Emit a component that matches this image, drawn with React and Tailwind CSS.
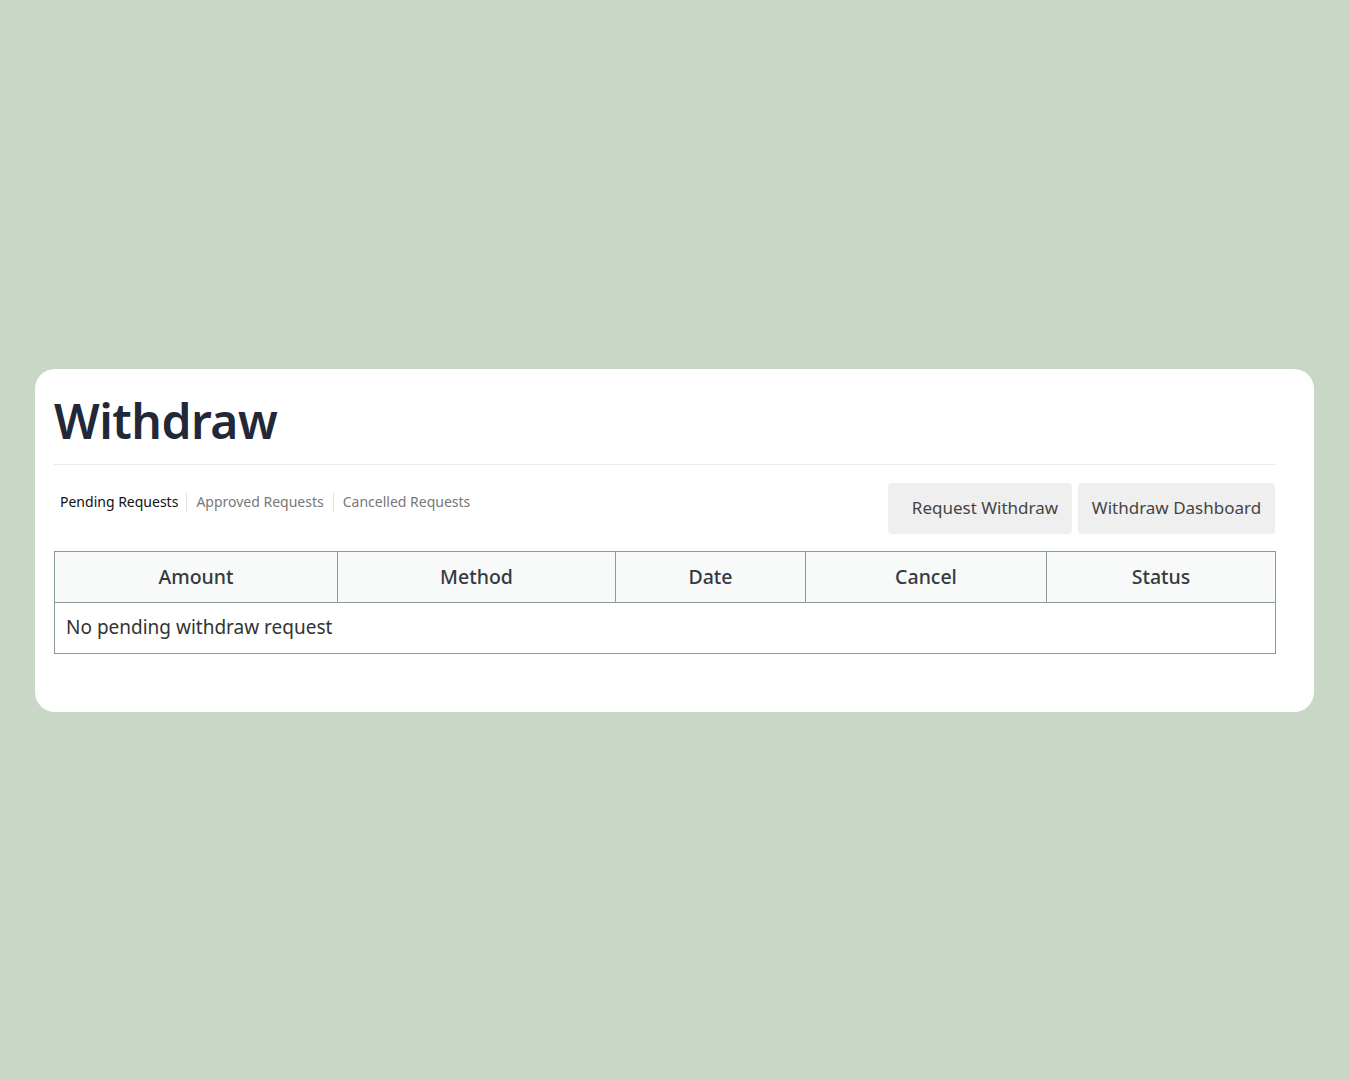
import React from "react";

const tabs = ["Pending Requests", "Approved Requests", "Cancelled Requests"];
const columns = [
  { label: "Amount", w: "w-[283px]" },
  { label: "Method", w: "w-[278px]" },
  { label: "Date", w: "w-[190px]" },
  { label: "Cancel", w: "w-[241px]" },
  { label: "Status", w: "w-[229px]" },
];

const App = () => {
  return (
    <div
      className="w-full min-h-screen bg-[#c9d7c7] flex items-center pl-[35px] pr-[36px]"
      style={{ fontFamily: '"Noto Sans", "Open Sans", sans-serif' }}
    >
      <div className="w-full bg-white rounded-[20px] pl-[19px] pr-[39px] pt-[22px] pb-[58px]">
        <h1 className="text-[48px] leading-[60px] font-semibold text-[#222838] tracking-[-0.5px]">
          Withdraw
        </h1>
        <div className="mt-[13px] border-t border-[#e7e9eb]" />

        <div className="flex items-start justify-between mt-[18px]">
          <div className="flex items-center mt-[9px] pl-[6px] text-[14px] leading-5">
            {tabs.map((t, i) => (
              <span
                key={t}
                className={
                  (i === 0 ? "text-[#111] pr-[8px]" : "text-[#777] px-[9px]") +
                  (i < tabs.length - 1 ? " border-r border-[#e2e2e2]" : "")
                }
              >
                {t}
              </span>
            ))}
          </div>
          <div className="flex gap-[6px]">
            <button className="h-[51px] w-[184px] bg-[#efefef] rounded-[4px] text-[17px] text-[#444] pl-[10px]">
              Request Withdraw
            </button>
            <button className="h-[51px] w-[197px] bg-[#efefef] rounded-[4px] text-[17px] text-[#444]">
              Withdraw Dashboard
            </button>
          </div>
        </div>

        <table className="w-full mt-[17px] border-collapse border border-[#8b9b9b] table-fixed">
          <thead>
            <tr className="bg-[#f8f9f9]">
              {columns.map((c) => (
                <th
                  key={c.label}
                  className={`${c.w} h-[51px] border border-[#8b9b9b] text-[19.5px] font-medium text-[#343a40] text-center`}
                >
                  {c.label}
                </th>
              ))}
            </tr>
          </thead>
          <tbody>
            <tr>
              <td
                colSpan={5}
                className="h-[51px] px-[11px] text-[19px] text-[#333] border border-[#8b9b9b]"
              >
                No pending withdraw request
              </td>
            </tr>
          </tbody>
        </table>
      </div>
    </div>
  );
};

export default App;
